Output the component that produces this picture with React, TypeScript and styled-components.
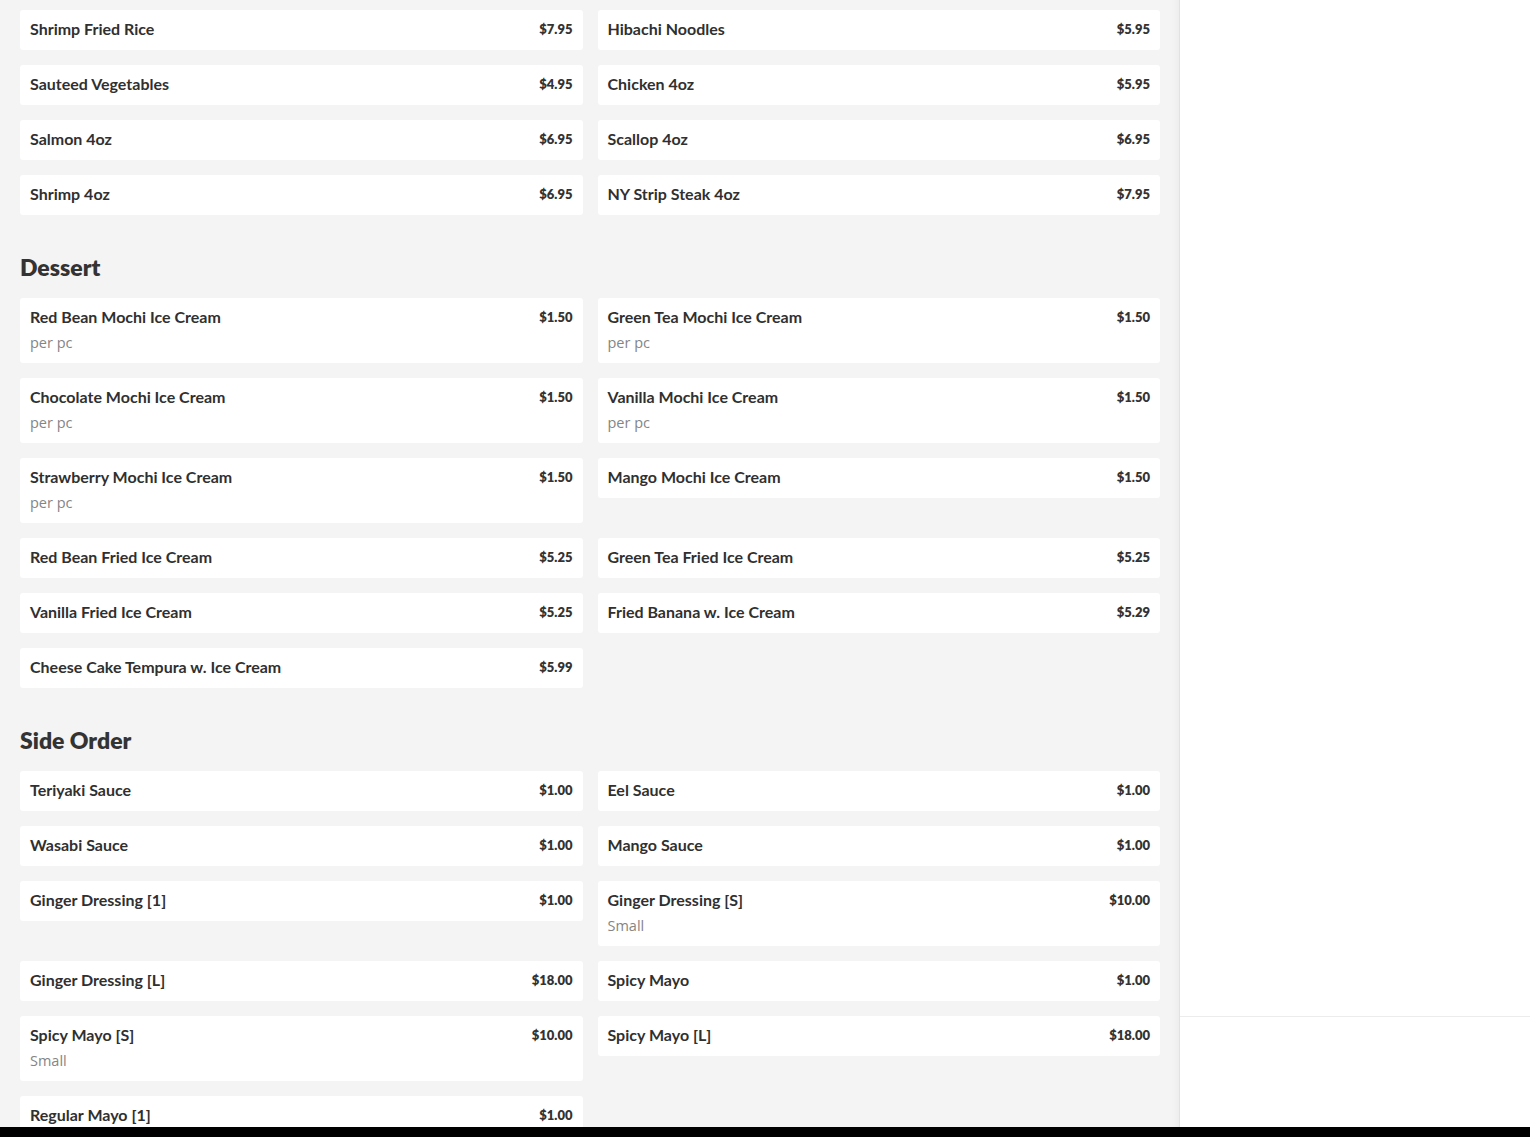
import styled, { createGlobalStyle } from 'styled-components';

const GlobalStyle = createGlobalStyle`
  html, body {
    margin: 0;
    padding: 0;
    height: 100%;
    overflow: hidden;
    background: #fff;
  }
  * {
    box-sizing: border-box;
  }
`;

const Page = styled.div`
  display: flex;
  flex-direction: column;
  height: 1137px;
`;

const Body = styled.div`
  display: flex;
  flex: 1;
  min-height: 0;
`;

const MenuArea = styled.main`
  width: 1180px;
  flex-shrink: 0;
  background: #f4f4f4;
  border-right: 1px solid #e2e2e2;
  box-shadow: inset -8px 0 10px -8px rgba(0, 0, 0, 0.06);
  padding: 10px 19px 0 20px;
  overflow: hidden;
  font-family: Lato, 'Liberation Sans', sans-serif;
`;

const SidePanel = styled.aside`
  flex: 1;
  display: flex;
  flex-direction: column;
  background: #fff;
`;

const PanelTop = styled.div`
  height: 1017px;
  border-bottom: 1px solid #ececec;
`;

const BottomBar = styled.div`
  height: 10px;
  background: #000;
  flex-shrink: 0;
`;

const Heading = styled.h2`
  margin: 38px 0 17px;
  font-size: 23px;
  line-height: 28px;
  font-weight: 800;
  color: #333;
`;

const Grid = styled.div`
  display: grid;
  grid-template-columns: 1fr 1fr;
  gap: 15px;
  align-items: start;
`;

const Card = styled.div`
  background: #fff;
  border-radius: 3px;
  padding: 9px 10px 11px;
  display: flex;
  justify-content: space-between;
  align-items: flex-start;
`;

const Info = styled.div`
  display: flex;
  flex-direction: column;
`;

const Name = styled.div`
  font-size: 16px;
  line-height: 20px;
  font-weight: 700;
  color: #303030;
`;

const Note = styled.div`
  margin-top: 6px;
  font-family: 'Open Sans', 'Liberation Sans', sans-serif;
  font-size: 14.5px;
  line-height: 19px;
  font-weight: 400;
  color: #858585;
`;

const Price = styled.div`
  margin-top: 1px;
  font-size: 13px;
  line-height: 18px;
  font-weight: 800;
  color: #333;
`;

type Item = { name: string; price: string; note?: string };

const hibachi: Item[] = [
  { name: 'Shrimp Fried Rice', price: '$7.95' },
  { name: 'Hibachi Noodles', price: '$5.95' },
  { name: 'Sauteed Vegetables', price: '$4.95' },
  { name: 'Chicken 4oz', price: '$5.95' },
  { name: 'Salmon 4oz', price: '$6.95' },
  { name: 'Scallop 4oz', price: '$6.95' },
  { name: 'Shrimp 4oz', price: '$6.95' },
  { name: 'NY Strip Steak 4oz', price: '$7.95' },
];

const dessert: Item[] = [
  { name: 'Red Bean Mochi Ice Cream', price: '$1.50', note: 'per pc' },
  { name: 'Green Tea Mochi Ice Cream', price: '$1.50', note: 'per pc' },
  { name: 'Chocolate Mochi Ice Cream', price: '$1.50', note: 'per pc' },
  { name: 'Vanilla Mochi Ice Cream', price: '$1.50', note: 'per pc' },
  { name: 'Strawberry Mochi Ice Cream', price: '$1.50', note: 'per pc' },
  { name: 'Mango Mochi Ice Cream', price: '$1.50' },
  { name: 'Red Bean Fried Ice Cream', price: '$5.25' },
  { name: 'Green Tea Fried Ice Cream', price: '$5.25' },
  { name: 'Vanilla Fried Ice Cream', price: '$5.25' },
  { name: 'Fried Banana w. Ice Cream', price: '$5.29' },
  { name: 'Cheese Cake Tempura w. Ice Cream', price: '$5.99' },
];

const sides: Item[] = [
  { name: 'Teriyaki Sauce', price: '$1.00' },
  { name: 'Eel Sauce', price: '$1.00' },
  { name: 'Wasabi Sauce', price: '$1.00' },
  { name: 'Mango Sauce', price: '$1.00' },
  { name: 'Ginger Dressing [1]', price: '$1.00' },
  { name: 'Ginger Dressing [S]', price: '$10.00', note: 'Small' },
  { name: 'Ginger Dressing [L]', price: '$18.00' },
  { name: 'Spicy Mayo', price: '$1.00' },
  { name: 'Spicy Mayo [S]', price: '$10.00', note: 'Small' },
  { name: 'Spicy Mayo [L]', price: '$18.00' },
  { name: 'Regular Mayo [1]', price: '$1.00' },
];

function ItemGrid({ items }: { items: Item[] }) {
  return (
    <Grid>
      {items.map((it) => (
        <Card key={it.name}>
          <Info>
            <Name>{it.name}</Name>
            {it.note && <Note>{it.note}</Note>}
          </Info>
          <Price>{it.price}</Price>
        </Card>
      ))}
    </Grid>
  );
}

export default function App() {
  return (
    <Page>
      <GlobalStyle />
      <Body>
        <MenuArea>
          <ItemGrid items={hibachi} />
          <Heading>Dessert</Heading>
          <ItemGrid items={dessert} />
          <Heading>Side Order</Heading>
          <ItemGrid items={sides} />
        </MenuArea>
        <SidePanel>
          <PanelTop />
        </SidePanel>
      </Body>
      <BottomBar />
    </Page>
  );
}
